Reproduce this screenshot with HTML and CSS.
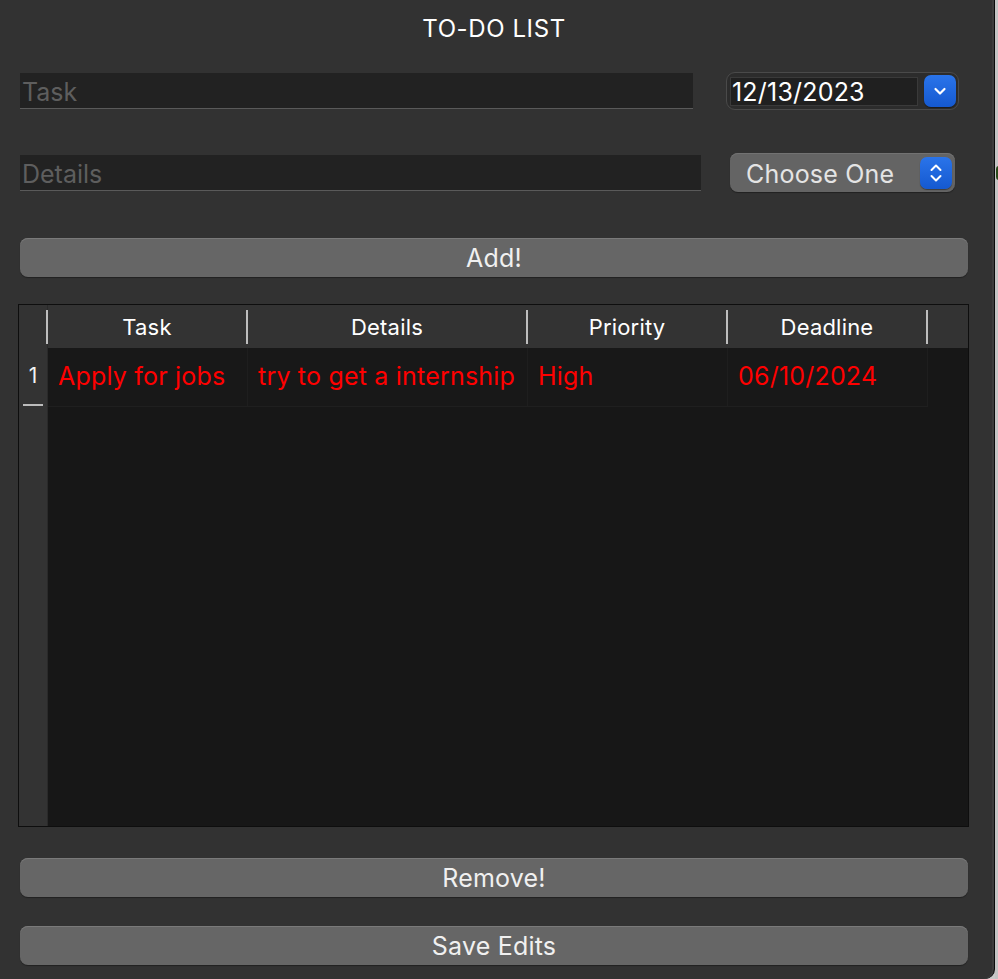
FILE: index.html
```html
<!DOCTYPE html>
<html>
<head>
<meta charset="utf-8">
<link rel="stylesheet" href="styles.css">
</head>
<body>
<div class="desk">
  <div class="window">
    <h1 class="title">TO-DO LIST</h1>
    <div class="row row1">
      <div class="field task-field"><span class="placeholder">Task</span></div>
      <div class="date-picker">
        <div class="date-text">12/13/2023</div>
        <div class="blue-btn">
          <svg width="16" height="12" viewBox="0 0 16 12"><path d="M3.5 4 L8 8.5 L12.5 4" fill="none" stroke="#fff" stroke-width="2.2" stroke-linecap="round" stroke-linejoin="round"/></svg>
        </div>
      </div>
    </div>
    <div class="row row2">
      <div class="field details-field"><span class="placeholder">Details</span></div>
      <div class="popup">
        <span class="popup-text">Choose One</span>
        <div class="blue-btn popup-btn">
          <svg width="16" height="26" viewBox="0 0 16 26"><path d="M3.5 10 L8 5.5 L12.5 10 M3.5 16 L8 20.5 L12.5 16" fill="none" stroke="#fff" stroke-width="2" stroke-linecap="round" stroke-linejoin="round"/></svg>
        </div>
      </div>
    </div>
    <button class="btn add-btn">Add!</button>
    <div class="table">
      <div class="rownums">
        <div class="rownum-head"></div>
        <div class="rownum">1</div>
      </div>
      <div class="grid">
        <div class="thead">
          <div class="th c1">Task</div>
          <div class="th c2">Details</div>
          <div class="th c3">Priority</div>
          <div class="th c4">Deadline</div>
          <div class="th c5"></div>
        </div>
        <div class="tr">
          <div class="td c1">Apply for jobs</div>
          <div class="td c2">try to get a internship</div>
          <div class="td c3">High</div>
          <div class="td c4">06/10/2024</div>
        </div>
      </div>
    </div>
    <button class="btn remove-btn">Remove!</button>
    <button class="btn save-btn">Save Edits</button>
  </div>
  <div class="outside">
    <span class="green-dot"></span>
  </div>
</div>
</body>
</html>
```

FILE: styles.css
```css
* { box-sizing: border-box; }
html, body {
  margin: 0;
  padding: 0;
  width: 998px;
  height: 979px;
  overflow: hidden;
  background: #c9c9c9;
  font-family: Inter, "Open Sans", "Liberation Sans", sans-serif;
}
.desk {
  display: flex;
  height: 979px;
}
.window {
  width: 995px;
  height: 979px;
  background: #323232;
  border-right: 1px solid #0a0a0a;
  box-shadow: inset -2px 0 0 #3c3c3c;
  border-bottom-right-radius: 10px;
  padding-left: 20px;
  display: flex;
  flex-direction: column;
  flex: none;
}
.outside {
  flex: 1;
  position: relative;
  background: #c4c4c4;
}
.green-dot {
  position: absolute;
  left: 1px;
  top: 166px;
  width: 6px;
  height: 14px;
  border-radius: 6px;
  background: #2a4a1a;
}
.title {
  margin: 0;
  padding-top: 16px;
  height: 42px;
  font-size: 24px;
  line-height: 26px;
  font-weight: 400;
  color: #ffffff;
  text-align: center;
  letter-spacing: 0.6px;
  width: 948px;
}
.row {
  display: flex;
  align-items: center;
}
.row1 {
  margin-top: 30px;
  height: 38px;
}
.row2 {
  margin-top: 43px;
  height: 39px;
}
.field {
  background: #222222;
  border-bottom: 1px solid #5a5a5a;
  height: 36px;
  display: flex;
  align-items: center;
  padding-left: 2px;
}
.task-field { width: 673px; }
.details-field { width: 681px; }
.placeholder {
  font-size: 25px;
  color: #5e5e5e;
  padding-top: 3px;
}
.date-picker {
  margin-left: 33px;
  width: 233px;
  height: 38px;
  border: 1px solid #4a4a4a;
  border-radius: 9px;
  background: #2c2c2c;
  display: flex;
  align-items: center;
  padding-left: 3px;
}
.date-text {
  width: 188px;
  height: 29px;
  background: #202020;
  border: 1px solid #3a3a3a;
  color: #ffffff;
  font-size: 25px;
  line-height: 29px;
  padding-left: 1px;
  letter-spacing: 0.2px;
}
.blue-btn {
  width: 32px;
  height: 32px;
  border-radius: 7px;
  background: linear-gradient(#2a74ea, #1559d0);
  box-shadow: 0 1px 1px rgba(0,0,0,0.4);
  display: flex;
  align-items: center;
  justify-content: center;
  margin-left: 6px;
}
.popup {
  margin-left: 29px;
  width: 225px;
  height: 39px;
  border-radius: 8px;
  background: #646464;
  box-shadow: 0 1px 1px rgba(0,0,0,0.35), inset 0 1px 0 #727272;
  display: flex;
  align-items: center;
  padding-left: 16px;
}
.popup-text {
  color: #e4e4e4;
  font-size: 25px;
  flex: 1;
  letter-spacing: 0.2px;
  padding-top: 2px;
}
.popup-btn {
  margin-left: 0;
  margin-right: 3px;
}
.btn {
  display: block;
  width: 948px;
  height: 39px;
  border: none;
  border-radius: 8px;
  background: #666666;
  box-shadow: inset 0 1px 0 #7a7a7a, 0 1px 1px rgba(0,0,0,0.35);
  color: #f0f0f0;
  font-family: inherit;
  font-size: 25px;
  letter-spacing: 0.2px;
  padding: 0;
  margin: 0;
}
.add-btn { margin-top: 46px; }
.remove-btn { margin-top: 31px; }
.save-btn { margin-top: 29px; }
.table {
  margin-top: 27px;
  margin-left: -2px;
  width: 951px;
  height: 523px;
  border: 1px solid #0e0e0e;
  background: #171717;
  display: flex;
}
.rownums {
  width: 29px;
  background: #333333;
  display: flex;
  flex-direction: column;
  border-right: 1px solid #2a2a2a;
}
.rownum-head { height: 43px; }
.rownum {
  height: 59px;
  color: #f2f2f2;
  font-size: 21px;
  text-align: center;
  line-height: 56px;
  position: relative;
}
.rownum::after {
  content: "";
  position: absolute;
  left: 4px;
  right: 4px;
  bottom: 1px;
  height: 2px;
  background: #bcbcbc;
}
.grid {
  flex: 1;
  display: flex;
  flex-direction: column;
}
.thead {
  height: 43px;
  background: #333333;
  display: flex;
  align-items: center;
  padding-top: 1px;
}
.th {
  height: 34px;
  border-left: 2px solid #bdbdbd;
  color: #ffffff;
  font-size: 22px;
  text-align: center;
  line-height: 34px;
  letter-spacing: 0.2px;
}
.thead .c1 { margin-left: -2px; }
.c1 { width: 200px; }
.c2 { width: 280px; }
.c3 { width: 200px; }
.c4 { width: 200px; }
.c5 { width: 2px; }
.tr {
  height: 59px;
  display: flex;
  border-bottom: 1px solid #1f1f1f;
  width: 880px;
}
.td {
  background: #181818;
  border-right: 1px solid #1e1e1e;
  color: #ff0000;
  font-size: 25px;
  line-height: 56px;
  padding-left: 10px;
  white-space: nowrap;
  overflow: hidden;
  letter-spacing: 0.2px;
}
```
